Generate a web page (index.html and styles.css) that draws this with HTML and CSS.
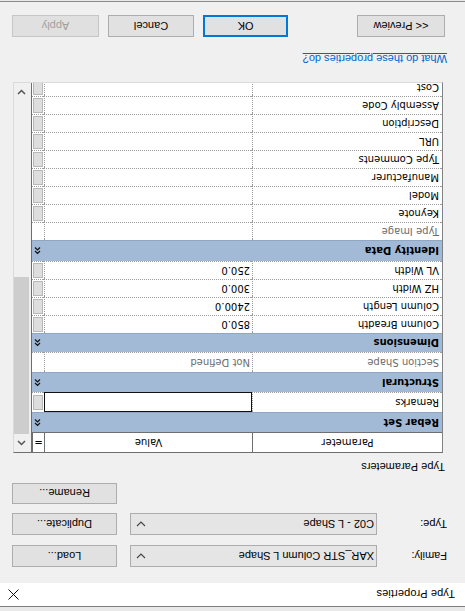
FILE: index.html
```html
<!DOCTYPE html>
<html>
<head>
<meta charset="utf-8">
<link rel="stylesheet" href="styles.css">
</head>
<body>
<div class="dialog">
  <div class="window">
    <div class="titlebar">
      <span class="title">Type Properties</span>
      <svg class="close" width="11" height="11" viewBox="0 0 11 11"><path d="M0.5 0.5 L10.5 10.5 M10.5 0.5 L0.5 10.5" stroke="#111" stroke-width="1"/></svg>
    </div>
    <div class="content">
      <div class="row">
        <span class="lbl">Family:</span>
        <div class="combo"><span>XAR_STR Column L Shape</span><svg width="10" height="6" viewBox="0 0 10 6"><path d="M1 1 L5 5 L9 1" fill="none" stroke="#444" stroke-width="1.1"/></svg></div>
        <button class="btn side">Load...</button>
      </div>
      <div class="row">
        <span class="lbl">Type:</span>
        <div class="combo"><span>C02 - L Shape</span><svg width="10" height="6" viewBox="0 0 10 6"><path d="M1 1 L5 5 L9 1" fill="none" stroke="#444" stroke-width="1.1"/></svg></div>
        <button class="btn side">Duplicate...</button>
      </div>
      <div class="row row-end">
        <button class="btn side rename">Rename...</button>
      </div>
      <div class="section-label">Type Parameters</div>
      <div class="table">
        <div class="grid">
          <div class="gr head"><div class="c">Parameter</div><div class="c">Value</div><div class="c eq">=</div></div>
          <div class="gr group"><div class="c gname">Rebar Set</div><div class="c eq"><svg width="7" height="9" viewBox="0 0 7 9"><path d="M1 4 L3.5 1.5 L6 4 M1 7.5 L3.5 5 L6 7.5" fill="none" stroke="#111" stroke-width="1.2"/></svg></div></div>
          <div class="gr tall"><div class="c">Remarks</div><div class="c edit"></div><div class="c eq"><i class="fb"></i></div></div>
          <div class="gr group"><div class="c gname">Structural</div><div class="c eq"><svg width="7" height="9" viewBox="0 0 7 9"><path d="M1 4 L3.5 1.5 L6 4 M1 7.5 L3.5 5 L6 7.5" fill="none" stroke="#111" stroke-width="1.2"/></svg></div></div>
          <div class="gr tall ro"><div class="c">Section Shape</div><div class="c">Not Defined</div><div class="c eq"></div></div>
          <div class="gr group small"><div class="c gname">Dimensions</div><div class="c eq"><svg width="7" height="9" viewBox="0 0 7 9"><path d="M1 4 L3.5 1.5 L6 4 M1 7.5 L3.5 5 L6 7.5" fill="none" stroke="#111" stroke-width="1.2"/></svg></div></div>
          <div class="gr"><div class="c">Column Breadth</div><div class="c">850.0</div><div class="c eq"><i class="fb"></i></div></div>
          <div class="gr"><div class="c">Column Length</div><div class="c">2400.0</div><div class="c eq"><i class="fb"></i></div></div>
          <div class="gr"><div class="c">HZ Width</div><div class="c">300.0</div><div class="c eq"><i class="fb"></i></div></div>
          <div class="gr"><div class="c">VL Width</div><div class="c">250.0</div><div class="c eq"><i class="fb"></i></div></div>
          <div class="gr group big"><div class="c gname">Identity Data</div><div class="c eq"><svg width="7" height="9" viewBox="0 0 7 9"><path d="M1 4 L3.5 1.5 L6 4 M1 7.5 L3.5 5 L6 7.5" fill="none" stroke="#111" stroke-width="1.2"/></svg></div></div>
          <div class="gr ro"><div class="c">Type Image</div><div class="c"></div><div class="c eq"></div></div>
          <div class="gr"><div class="c">Keynote</div><div class="c"></div><div class="c eq"><i class="fb"></i></div></div>
          <div class="gr"><div class="c">Model</div><div class="c"></div><div class="c eq"><i class="fb"></i></div></div>
          <div class="gr"><div class="c">Manufacturer</div><div class="c"></div><div class="c eq"><i class="fb"></i></div></div>
          <div class="gr"><div class="c">Type Comments</div><div class="c"></div><div class="c eq"><i class="fb"></i></div></div>
          <div class="gr"><div class="c">URL</div><div class="c"></div><div class="c eq"><i class="fb"></i></div></div>
          <div class="gr"><div class="c">Description</div><div class="c"></div><div class="c eq"><i class="fb"></i></div></div>
          <div class="gr"><div class="c">Assembly Code</div><div class="c"></div><div class="c eq"><i class="fb"></i></div></div>
          <div class="gr"><div class="c">Cost</div><div class="c"></div><div class="c eq"><i class="fb"></i></div></div>
        </div>
        <div class="scrollbar">
          <div class="arrow"><svg width="9" height="6" viewBox="0 0 9 6"><path d="M1 5 L4.5 1.5 L8 5" fill="none" stroke="#555" stroke-width="1.5"/></svg></div>
          <div class="thumb"></div>
          <div class="track"></div>
          <div class="arrow"><svg width="9" height="6" viewBox="0 0 9 6"><path d="M1 1 L4.5 4.5 L8 1" fill="none" stroke="#555" stroke-width="1.5"/></svg></div>
        </div>
      </div>
      <a class="help">What do these properties do?</a>
      <div class="buttons">
        <button class="btn b-preview">&lt;&lt; Preview</button>
        <div class="btn-group">
          <button class="btn b-ok">OK</button>
          <button class="btn b-cancel">Cancel</button>
          <button class="btn b-apply" disabled>Apply</button>
        </div>
      </div>
    </div>
  </div>
</div>
</body>
</html>
```

FILE: styles.css
```css
html, body {
  margin: 0;
  padding: 0;
  background: #ffffff;
}
body {
  width: 465px;
  height: 611px;
  overflow: hidden;
}
.dialog {
  width: 465px;
  height: 611px;
  box-sizing: border-box;
  padding-top: 4px;
  padding-bottom: 1px;
  background: #e9e9e9;
  transform: rotate(180deg);
  font-family: "Liberation Sans", Arial, sans-serif;
  font-size: 11px;
  color: #000;
}
.window {
  height: 100%;
  box-sizing: border-box;
  border-top: 1px solid #7d7d7d;
  border-bottom: 1px solid #8c8c8c;
  background: #f0f0f0;
  display: flex;
  flex-direction: column;
}
.titlebar {
  height: 23px;
  background: #ffffff;
  display: flex;
  align-items: center;
  justify-content: space-between;
  padding: 0 8px 0 10px;
  flex: none;
}
.title {
  font-size: 11px;
  letter-spacing: 0.1px;
}
.close {
  display: block;
}
.content {
  padding: 16px 12px 0 18px;
  display: flex;
  flex-direction: column;
}
.row {
  display: flex;
  align-items: center;
  height: 22px;
  margin-bottom: 10px;
}
.row-end {
  justify-content: flex-end;
  height: 21px;
  margin-top: -1px;
  margin-bottom: 0;
}
.lbl {
  width: 70px;
  flex: none;
}
.combo {
  width: 247px;
  height: 22px;
  box-sizing: border-box;
  border: 1px solid #adadad;
  background: #e5e5e5;
  display: flex;
  align-items: center;
  justify-content: space-between;
  padding: 0 5px 0 2px;
}
.btn {
  font-family: "Liberation Sans", Arial, sans-serif;
  font-size: 11px;
  color: #000;
  background: #e1e1e1;
  border: 1px solid #adadad;
  height: 22px;
  box-sizing: border-box;
  padding: 0;
  margin: 0;
}
.side {
  width: 105px;
  margin-left: auto;
}
.rename {
  height: 21px;
}
.section-label {
  height: 16px;
  line-height: 16px;
  margin-top: 8px;
  padding-left: 2px;
}
.table {
  margin-top: 6px;
  margin-left: 4px;
  margin-right: 1px;
  height: 371px;
  box-sizing: border-box;
  border-top: 1px solid #6e6e6e;
  border-left: 1px solid #828282;
  border-right: 1px solid #dadada;
  border-bottom: 1px solid #dadada;
  display: flex;
  overflow: hidden;
  background: #fff;
}
.grid {
  width: 410px;
  flex: none;
  font-family: "DejaVu Sans", Verdana, sans-serif;
  font-size: 10px;
  overflow: hidden;
}
.gr {
  display: grid;
  grid-template-columns: 190px 208px 12px;
  height: 18px;
}
.gr.tall { height: 20px; }
.c {
  box-sizing: border-box;
  border-right: 1px dotted #9c9c9c;
  border-bottom: 1px dotted #9c9c9c;
  padding-left: 3px;
  display: flex;
  align-items: center;
  white-space: nowrap;
  overflow: hidden;
}
.c:nth-child(2) { padding-left: 2px; }
.c.eq {
  padding: 0;
  justify-content: center;
  border-right: none;
}
.ro .c { color: #6d6d6d; }
.fb {
  display: block;
  width: 10px;
  height: 15px;
  box-sizing: border-box;
  background: #dedede;
  border: 1px solid #b8b8b8;
}
.head {
  height: 20px;
}
.head .c {
  justify-content: center;
  padding: 0;
  border-right: 1px solid #6e6e6e;
  border-bottom: 1px solid #6e6e6e;
}
.head .c.eq {
  border-right: 1px solid #6e6e6e;
  font-size: 10px;
}
.group {
  height: 20px;
  background: #a2bad6;
}
.group.big { height: 21px; }
.group.small { height: 19px; }
.group .gname {
  grid-column: 1 / 3;
  font-weight: bold;
  border-right: none;
  border-bottom: 1px solid #8ea7c4;
}
.group .c.eq {
  border-bottom: 1px solid #8ea7c4;
}
.edit {
  border: 1px solid #111 !important;
}
.scrollbar {
  width: 19px;
  flex: none;
  background: #f0f0f0;
  display: flex;
  flex-direction: column;
  align-items: center;
  border-left: 1px solid #6e6e6e;
  box-sizing: border-box;
}
.arrow {
  height: 18px;
  width: 100%;
  flex: none;
  display: flex;
  align-items: center;
  justify-content: center;
}
.thumb {
  width: 15px;
  height: 157px;
  flex: none;
  background: #cdcdcd;
}
.track {
  flex: 1;
}
.help {
  color: #0066cc;
  text-decoration: underline;
  margin-top: 15px;
  height: 16px;
  line-height: 16px;
  align-self: flex-start;
}
.buttons {
  margin-top: 14px;
  display: flex;
  padding-left: 2px;
}
.b-preview {
  width: 88px;
}
.btn-group {
  margin-left: auto;
  display: flex;
  gap: 9px;
}
.b-ok {
  width: 85px;
  border: 2px solid #0078d7;
}
.b-cancel {
  width: 86px;
}
.b-apply {
  width: 87px;
  color: #a0a0a0;
  background: #e0e0e0;
  border-color: #c6c6c6;
}
```
